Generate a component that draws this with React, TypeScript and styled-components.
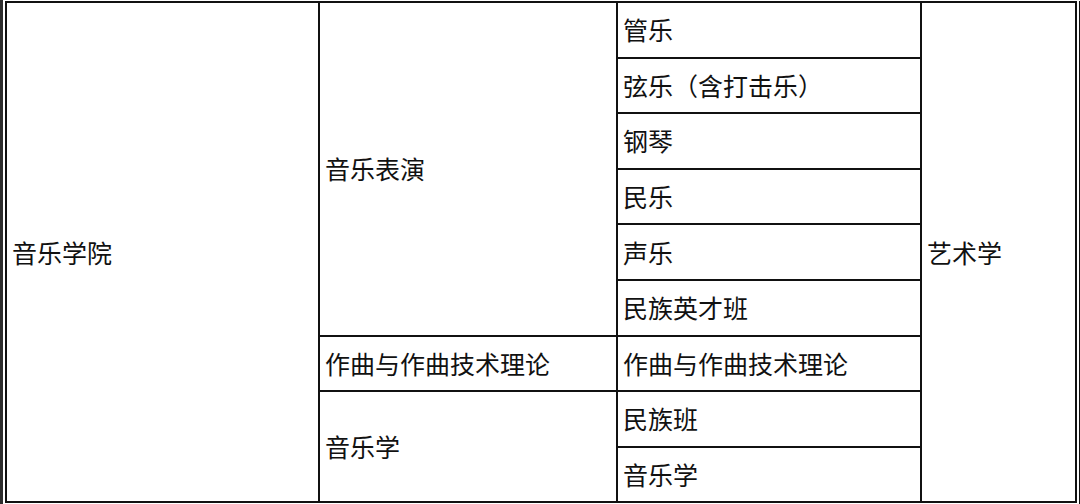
import React from 'react';
import styled, { createGlobalStyle } from 'styled-components';

const GlobalStyle = createGlobalStyle`
  html, body {
    margin: 0;
    padding: 0;
    background: #ffffff;
  }
  body {
    font-family: 'Noto Sans CJK SC', 'Noto Sans', sans-serif;
  }
`;

const Frame = styled.div`
  width: 1080px;
  height: 504px;
  box-sizing: border-box;
  padding: 1px 0 0 2px;
  border-left: 3px solid #2e2e2e;
  display: flex;
  overflow: hidden;
`;

const Edge = styled.div`
  width: 3px;
  height: 504px;
  margin-left: 2px;
  background: #111111;
`;

const Table = styled.table`
  border-collapse: collapse;
  table-layout: fixed;
  width: 1070px;
  height: 501px;
`;

const Col = styled.col<{ $w: number }>`
  width: ${(p) => p.$w}px;
`;

const Row = styled.tr`
  height: 55.6px;
`;

const Cell = styled.td`
  border: 2px solid #111111;
  padding: 0 5px;
  font-size: 25px;
  line-height: 1;
  color: #111111;
  vertical-align: middle;
  white-space: nowrap;
`;

const majors = ['管乐', '弦乐（含打击乐）', '钢琴', '民乐', '声乐', '民族英才班'];

export default function App() {
  return (
    <>
      <GlobalStyle />
      <Frame>
        <Table>
          <colgroup>
            <Col $w={313} />
            <Col $w={298} />
            <Col $w={304} />
            <Col $w={155} />
          </colgroup>
          <tbody>
            {majors.map((m, i) => (
              <Row key={m}>
                {i === 0 && <Cell rowSpan={9}>音乐学院</Cell>}
                {i === 0 && <Cell rowSpan={6}>音乐表演</Cell>}
                <Cell>{m}</Cell>
                {i === 0 && <Cell rowSpan={9}>艺术学</Cell>}
              </Row>
            ))}
            <Row>
              <Cell>作曲与作曲技术理论</Cell>
              <Cell>作曲与作曲技术理论</Cell>
            </Row>
            <Row>
              <Cell rowSpan={2}>音乐学</Cell>
              <Cell>民族班</Cell>
            </Row>
            <Row>
              <Cell>音乐学</Cell>
            </Row>
          </tbody>
        </Table>
        <Edge />
      </Frame>
    </>
  );
}
